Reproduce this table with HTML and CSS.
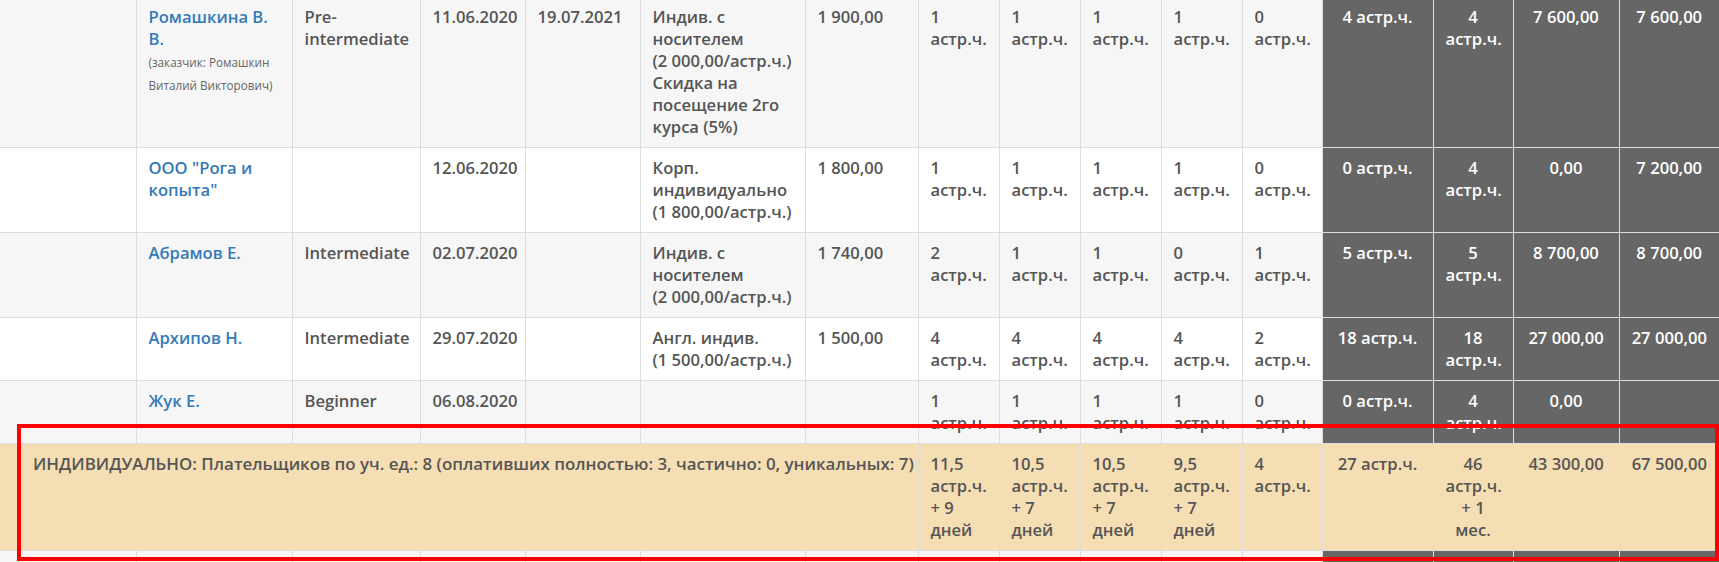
FILE: index.html
```html
<!DOCTYPE html>
<html lang="ru">
<head>
<meta charset="utf-8">
<title>Отчёт</title>
<link rel="stylesheet" href="styles.css">
</head>
<body>
<div class="viewport">
  <table class="report">
    <colgroup>
      <col class="c-blank"><col class="c-name"><col class="c-level"><col class="c-date"><col class="c-date2">
      <col class="c-tariff"><col class="c-price">
      <col class="c-h"><col class="c-h"><col class="c-h"><col class="c-h"><col class="c-h5">
      <col class="c-t1"><col class="c-t2"><col class="c-m1"><col class="c-m2">
    </colgroup>
    <tbody>
      <tr class="odd">
        <td></td>
        <td><a href="#" class="name">Ромашкина В. В.</a><br><span class="note">(заказчик: Ромашкин Виталий Викторович)</span></td>
        <td>Pre-intermediate</td>
        <td>11.06.2020</td>
        <td>19.07.2021</td>
        <td>Индив. с носителем (2&nbsp;000,00/астр.ч.)<br>Скидка на посещение 2го курса (5%)</td>
        <td>1&nbsp;900,00</td>
        <td>1<br>астр.ч.</td><td>1<br>астр.ч.</td><td>1<br>астр.ч.</td><td>1<br>астр.ч.</td><td>0<br>астр.ч.</td>
        <td class="dk">4 астр.ч.</td><td class="dk">4<br>астр.ч.</td><td class="dk">7&nbsp;600,00</td><td class="dk">7&nbsp;600,00</td>
      </tr>
      <tr>
        <td></td>
        <td><a href="#" class="name">ООО "Рога и копыта"</a></td>
        <td></td>
        <td>12.06.2020</td>
        <td></td>
        <td>Корп. индивидуально (1&nbsp;800,00/астр.ч.)</td>
        <td>1&nbsp;800,00</td>
        <td>1<br>астр.ч.</td><td>1<br>астр.ч.</td><td>1<br>астр.ч.</td><td>1<br>астр.ч.</td><td>0<br>астр.ч.</td>
        <td class="dk">0 астр.ч.</td><td class="dk">4<br>астр.ч.</td><td class="dk">0,00</td><td class="dk">7&nbsp;200,00</td>
      </tr>
      <tr class="odd">
        <td></td>
        <td><a href="#" class="name">Абрамов Е.</a></td>
        <td>Intermediate</td>
        <td>02.07.2020</td>
        <td></td>
        <td>Индив. с носителем (2&nbsp;000,00/астр.ч.)</td>
        <td>1&nbsp;740,00</td>
        <td>2<br>астр.ч.</td><td>1<br>астр.ч.</td><td>1<br>астр.ч.</td><td>0<br>астр.ч.</td><td>1<br>астр.ч.</td>
        <td class="dk">5 астр.ч.</td><td class="dk">5<br>астр.ч.</td><td class="dk">8&nbsp;700,00</td><td class="dk">8&nbsp;700,00</td>
      </tr>
      <tr>
        <td></td>
        <td><a href="#" class="name">Архипов Н.</a></td>
        <td>Intermediate</td>
        <td>29.07.2020</td>
        <td></td>
        <td>Англ. индив. (1&nbsp;500,00/астр.ч.)</td>
        <td>1&nbsp;500,00</td>
        <td>4<br>астр.ч.</td><td>4<br>астр.ч.</td><td>4<br>астр.ч.</td><td>4<br>астр.ч.</td><td>2<br>астр.ч.</td>
        <td class="dk">18 астр.ч.</td><td class="dk">18<br>астр.ч.</td><td class="dk">27&nbsp;000,00</td><td class="dk">27&nbsp;000,00</td>
      </tr>
      <tr class="odd">
        <td></td>
        <td><a href="#" class="name">Жук Е.</a></td>
        <td>Beginner</td>
        <td>06.08.2020</td>
        <td></td>
        <td></td>
        <td></td>
        <td>1<br>астр.ч.</td><td>1<br>астр.ч.</td><td>1<br>астр.ч.</td><td>1<br>астр.ч.</td><td>0<br>астр.ч.</td>
        <td class="dk">0 астр.ч.</td><td class="dk">4<br>астр.ч.</td><td class="dk">0,00</td><td class="dk"></td>
      </tr>
      <tr class="total">
        <td colspan="7" class="total-label">ИНДИВИДУАЛЬНО: Плательщиков по уч. ед.: 8 (оплативших полностью: 3, частично: 0, уникальных: 7)</td>
        <td>11,5<br>астр.ч.<br>+ 9<br>дней</td>
        <td>10,5<br>астр.ч.<br>+ 7<br>дней</td>
        <td>10,5<br>астр.ч.<br>+ 7<br>дней</td>
        <td>9,5<br>астр.ч.<br>+ 7<br>дней</td>
        <td>4<br>астр.ч.</td>
        <td class="ctr">27 астр.ч.</td>
        <td class="ctr">46<br>астр.ч.<br>+ 1<br>мес.</td>
        <td class="ctr">43&nbsp;300,00</td>
        <td class="ctr">67&nbsp;500,00</td>
      </tr>
      <tr class="odd">
        <td></td><td></td><td></td><td></td><td></td><td></td><td></td>
        <td></td><td></td><td></td><td></td><td></td>
        <td class="dk"></td><td class="dk"></td><td class="dk"></td><td class="dk"></td>
      </tr>
    </tbody>
  </table>
  <div class="highlight"></div>
</div>
</body>
</html>
```
FILE: styles.css
```css
html, body {
  margin: 0;
  padding: 0;
  background: #fff;
}

body {
  font-family: "Open Sans", "Noto Sans", sans-serif;
  font-size: 16.6px;
  line-height: 22px;
  font-weight: 600;
  color: #555;
}

.viewport {
  position: relative;
  height: 562px;
  overflow: hidden;
}

.report {
  width: 1719px;
  border-collapse: collapse;
  table-layout: fixed;
  margin-top: -4px;
}

.c-blank { width: 136px; }
.c-name { width: 156px; }
.c-level { width: 128px; }
.c-date { width: 105px; }
.c-date2 { width: 115px; }
.c-tariff { width: 165px; }
.c-price { width: 113px; }
.c-h { width: 81px; }
.c-h5 { width: 80px; }
.c-t1 { width: 111px; }
.c-t2 { width: 80px; }
.c-m1 { width: 106px; }
.c-m2 { width: 100px; }

.report td {
  padding: 9px 12px;
  border: 1px solid #dddddd;
  vertical-align: top;
  text-align: left;
}

.report td:first-child { border-left: 0; }
.report td:last-child { border-right: 0; }

.report tr.odd td { background: #f6f6f6; }

.report td.dk {
  background: #666666;
  color: #fff;
  text-align: center;
}

.report tr.odd td.dk { background: #666666; }

.name {
  color: #337ab7;
  text-decoration: none;
}

.note {
  font-size: 11.7px;
  font-weight: 400;
  color: #666;
}

.report tr.total td {
  background: #f5deb3;
  color: #555;
}

.report td.total-label {
  padding-left: 33px;
  font-size: 16.9px;
  white-space: nowrap;
}

.report td.ctr { text-align: center; }

.highlight {
  position: absolute;
  left: 17px;
  top: 424px;
  right: 0;
  height: 129px;
  border: 4px solid #ff0000;
  pointer-events: none;
}
```
